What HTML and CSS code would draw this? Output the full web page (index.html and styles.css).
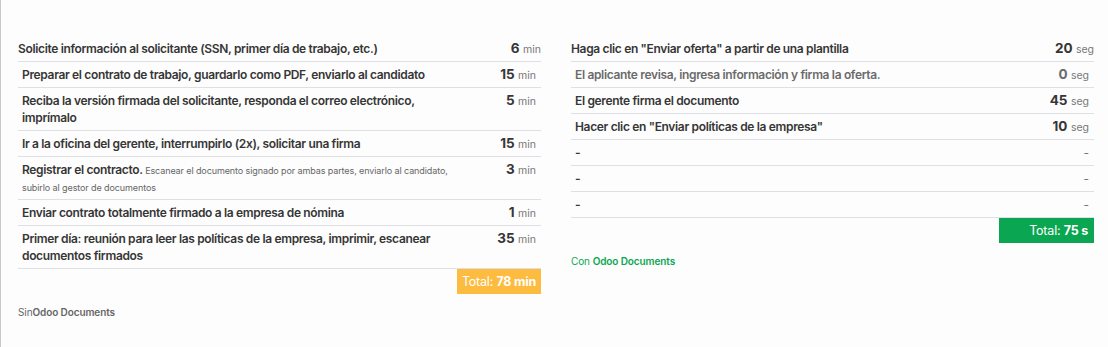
FILE: index.html
```html
<!DOCTYPE html>
<html lang="es">
<head>
<meta charset="utf-8">
<link rel="stylesheet" href="styles.css">
</head>
<body>
<div class="frame">
  <div class="cols">
    <div class="col">
      <div class="table">
        <div class="row first"><div class="task">Solicite información al solicitante (SSN, primer día de trabajo, etc.)</div><div class="val"><b>6</b> <span class="unit">min</span></div></div>
        <div class="row"><div class="task">Preparar el contrato de trabajo, guardarlo como PDF, enviarlo al candidato</div><div class="val"><b>15</b> <span class="unit">min</span></div></div>
        <div class="row"><div class="task">Reciba la versión firmada del solicitante, responda el correo electrónico, imprímalo</div><div class="val"><b>5</b> <span class="unit">min</span></div></div>
        <div class="row"><div class="task">Ir a la oficina del gerente, interrumpirlo (2x), solicitar una firma</div><div class="val"><b>15</b> <span class="unit">min</span></div></div>
        <div class="row"><div class="task">Registrar el contracto. <span class="desc">Escanear el documento signado por ambas partes, enviarlo al candidato, subirlo al gestor de documentos</span></div><div class="val"><b>3</b> <span class="unit">min</span></div></div>
        <div class="row"><div class="task">Enviar contrato totalmente firmado a la empresa de nómina</div><div class="val"><b>1</b> <span class="unit">min</span></div></div>
        <div class="row"><div class="task">Primer día: reunión para leer las políticas de la empresa, imprimir, escanear documentos firmados</div><div class="val"><b>35</b> <span class="unit">min</span></div></div>
      </div>
      <div class="total-wrap"><div class="total yellow">Total: <b>78 min</b></div></div>
      <div class="caption gray">Sin<b>Odoo Documents</b></div>
    </div>
    <div class="col">
      <div class="table">
        <div class="row first"><div class="task">Haga clic en "Enviar oferta" a partir de una plantilla</div><div class="val"><b>20</b> <span class="unit">seg</span></div></div>
        <div class="row muted"><div class="task">El aplicante revisa, ingresa información y firma la oferta.</div><div class="val"><b>0</b> <span class="unit">seg</span></div></div>
        <div class="row"><div class="task">El gerente firma el documento</div><div class="val"><b>45</b> <span class="unit">seg</span></div></div>
        <div class="row"><div class="task">Hacer clic en "Enviar políticas de la empresa"</div><div class="val"><b>10</b> <span class="unit">seg</span></div></div>
        <div class="row"><div class="task">-</div><div class="val dash">-</div></div>
        <div class="row"><div class="task">-</div><div class="val dash">-</div></div>
        <div class="row"><div class="task">-</div><div class="val dash">-</div></div>
      </div>
      <div class="total-wrap"><div class="total green wide">Total: <b>75 s</b></div></div>
      <div class="caption greentext">Con <b>Odoo Documents</b></div>
    </div>
  </div>
</div>
</body>
</html>
```
FILE: styles.css
```css
html, body {
  margin: 0;
  padding: 0;
  background: #fdfdfd;
}
body {
  font-family: Inter, "Noto Sans", sans-serif;
  color: #363636;
}
.frame {
  box-sizing: border-box;
  height: 347px;
  border-left: 1px solid #c8c8c8;
  padding: 36px 0 0 17px;
}
.cols {
  display: flex;
  gap: 30px;
}
.col {
  width: 523px;
}
.row {
  display: flex;
  justify-content: space-between;
  align-items: flex-start;
  gap: 20px;
  padding: 4px 5px 4px 4px;
  border-bottom: 1px solid #dee0e4;
  font-size: 12px;
  line-height: 17px;
  font-weight: 600;
  letter-spacing: -0.34px;
}
.row.first {
  padding-left: 0;
  padding-right: 0;
}
.row.muted {
  color: #6b6b6b;
}
.task {
  flex: 0 1 444px;
}
.desc {
  font-size: 9px;
  line-height: 10px;
  font-weight: 400;
  color: #666;
  letter-spacing: -0.1px;
}
.val {
  white-space: nowrap;
  font-size: 13.5px;
  line-height: 17px;
  height: 17px;
  letter-spacing: 0;
}
.val b {
  font-weight: 700;
}
.unit {
  font-size: 10.5px;
  line-height: 10px;
  font-weight: 400;
  color: #777;
}
.dash {
  font-weight: 400;
  color: #777;
  font-size: 12px;
}
.total-wrap {
  display: flex;
  justify-content: flex-end;
}
.total {
  box-sizing: border-box;
  color: #fff;
  font-size: 12.5px;
  line-height: 25px;
  padding: 0 5px 0 5px;
  letter-spacing: -0.2px;
  text-align: right;
}
.total.wide {
  min-width: 95px;
  padding-right: 6px;
}
.total b {
  font-weight: 700;
}
.yellow {
  background: #fdbb3f;
}
.green {
  background: #0aa651;
}
.caption {
  margin-top: 12px;
  font-size: 10px;
  line-height: 13px;
  letter-spacing: -0.1px;
}
.caption b {
  font-weight: 600;
}
.gray {
  color: #666;
}
.greentext {
  color: #0aa651;
}
```
